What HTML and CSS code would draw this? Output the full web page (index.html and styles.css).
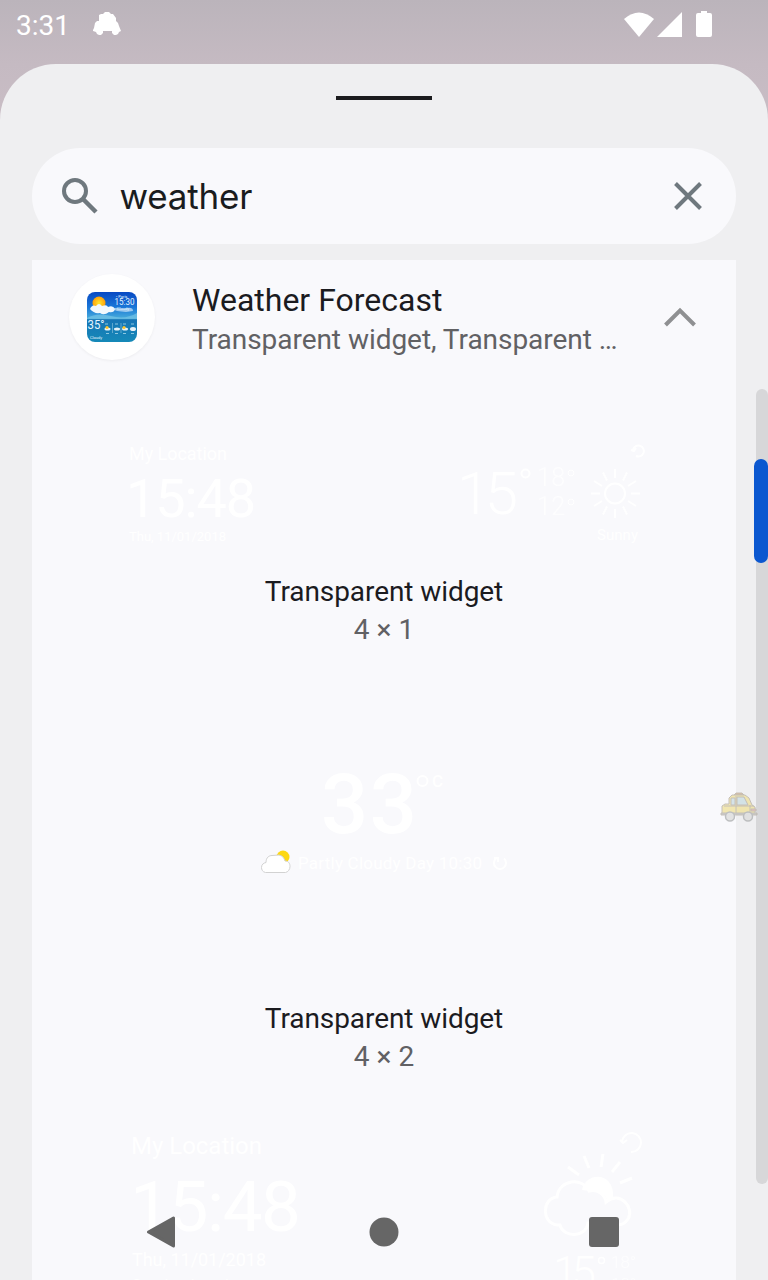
FILE: index.html
```html
<!DOCTYPE html>
<html lang="en">
<head>
<meta charset="utf-8">
<title>Widgets</title>
<link rel="stylesheet" href="styles.css">
</head>
<body>
<div class="screen">
  <header class="status">
    <span class="clock">3:31</span>
    <svg class="status-car" width="28" height="23" viewBox="0 0 28 23" fill="#fff"><path d="M6 9V3l2-1h2l2-2h4l2 2h2l3 4v3l2 2 1 3 2 5-2 1-1 2-2 1h-2l-2-2v-2H10v2l-2 2H6l-2-1-1-2-3-1V18l1-2 1-5 2-2z"/></svg>
    <svg class="status-icons" width="90" height="28" viewBox="0 0 90 28" fill="#fff"><path d="M0 8Q15-5 30 8L15 26Z"/><path d="M33 26L58 1V26Z"/><path d="M77 0h6v2h3q2 0 2 2v20q0 2-2 2H74q-2 0-2-2V4q0-2 2-2h3z"/></svg>
  </header>
  <main class="sheet">
    <div class="handle"></div>
    <div class="search">
      <svg width="36" height="36" viewBox="0 0 36 36" fill="none" stroke="#6f787e" stroke-width="4"><circle cx="13" cy="13" r="11"/><path d="M21.500 21.500L34 34" stroke-width="4.500"/></svg>
      <span class="query">weather</span>
      <svg width="28" height="28" viewBox="0 0 28 28" fill="none" stroke="#6f787e" stroke-width="4"><path d="M1.500 1.500L26.500 26.500M26.500 1.500L1.500 26.500"/></svg>
    </div>
    <section class="results">
      <div class="app">
        <div class="app-icon">
          <svg width="50" height="50" viewBox="0 0 50 50">
            <defs>
              <linearGradient id="sky" x1="0" y1="0" x2="0" y2="1"><stop offset="0" stop-color="#0849c3"/><stop offset=".3" stop-color="#1976d8"/><stop offset=".52" stop-color="#45a9da"/><stop offset=".56" stop-color="#1775b5"/><stop offset="1" stop-color="#1589b8"/></linearGradient>
              <radialGradient id="glow"><stop offset="0" stop-color="#ffe72f"/><stop offset="1" stop-color="#ff9f08"/></radialGradient>
              <filter id="soft"><feGaussianBlur stdDeviation=".7"/></filter>
              <clipPath id="tile"><rect width="50" height="50" rx="8"/></clipPath>
            </defs>
            <g clip-path="url(#tile)">
              <rect width="50" height="50" fill="url(#sky)"/>
              <g filter="url(#soft)">
                <path d="M0 26Q10 20 24 24T50 21V27H0Z" fill="#7bc7e8" opacity=".65"/>
                <circle cx="12" cy="11" r="6.500" fill="url(#glow)"/>
                <path d="M3 17q2-5 6-3 3-4 6 0 5-2 6 1 5-2 7 2-1 4-6 3-5 4-9 1-6 1-10-4z" fill="#f1f8fd"/>
                <path d="M25 17q5-2 7-1t8 0 6 3l-7 1-9-1z" fill="#dcecfb" opacity=".65"/>
              </g>
              <g fill="#e5f5ff" font-family="Roboto, sans-serif">
                <text x="27.500" y="13" font-size="9" textLength="20" lengthAdjust="spacingAndGlyphs">15:30</text>
                <text x="29" y="5.500" font-size="4">• Paris</text>
                <text x="30" y="18" font-size="4">Cloudy</text>
                <text x=".5" y="37" font-size="12" textLength="17" lengthAdjust="spacingAndGlyphs">35°</text>
                <text x="3" y="46.500" font-size="4">Cloudy</text>
              </g>
              <g fill="#e6f1f7"><ellipse cx="20.500" cy="37" rx="3" ry="1.500"/><ellipse cx="30" cy="37" rx="3" ry="1.500"/><ellipse cx="38" cy="37" rx="3" ry="1.500"/><ellipse cx="46" cy="37" rx="3" ry="2"/><path d="M18 32h3M28 32h3M36 32h3M44 32h3M19 41.500h3M28 41.500h3M36 41.500h3M44 41.500h3" stroke="#8bc7e0"/><path d="M25.500 31v10M34 31v10" stroke="#80bbd8" stroke-width=".7"/></g>
              <g fill="#ffc52c"><circle cx="20" cy="35.500" r="1.600"/><circle cx="37" cy="35.500" r="1.600"/></g>
            </g>
          </svg>
        </div>
        <div class="app-text">
          <div class="app-name">Weather Forecast</div>
          <div class="app-sub">Transparent widget, Transparent …</div>
        </div>
        <svg class="chevron" width="32" height="20" viewBox="0 0 32 20" fill="none" stroke="#8f9092" stroke-width="4"><path d="M1.500 18L16 3.500 30.500 18"/></svg>
      </div>

      <article class="widget">
        <svg class="preview" width="704" height="199" viewBox="32 374 704 199">
          <g fill="#fff">
            <text x="129" y="460" font-size="18" textLength="98">My Location</text>
            <text x="126" y="516.500" font-size="54" textLength="130">15:48</text>
            <text x="129" y="541" font-size="13" textLength="97">Thu, 11/01/2018</text>
            <text x="457" y="514" font-size="60" font-weight="300" textLength="61">15</text>
            <text x="537" y="486" font-size="25" font-weight="300" opacity=".75" textLength="28">18</text>
            <text x="537" y="515" font-size="25" font-weight="300" opacity=".75" textLength="28">12</text>
            <text x="597" y="540" font-size="15" textLength="41">Sunny</text>
          </g>
          <g fill="none" stroke="#fff" stroke-width="2">
            <circle cx="525.500" cy="473.500" r="4"/><circle cx="571" cy="473" r="3" stroke-width="1"/><circle cx="571" cy="502" r="3" stroke-width="1"/>
            <circle cx="615" cy="493.500" r="10"/>
            <path d="M615 469v9M615 509v9M591 493.500h9M631 493.500h9M603 472.500l4 8M623 506.500l4 8M603 514.500l4-8M623 480.500l4-8M594 481l8 5M628 501l8 5M594 506l8-5M628 486l8-5"/>
            <path d="M633 450a5.500 5.500 0 1 1 3 6M631 450l3 1 2-3"/>
          </g>
        </svg>
        <div class="name">Transparent widget</div>
        <div class="size">4 × 1</div>
      </article>

      <article class="widget">
        <svg class="preview" width="704" height="351" viewBox="32 649 704 351">
          <g fill="#fff">
            <text x="321" y="832.500" font-size="83" font-weight="500" textLength="96">33</text>
            <text x="432" y="787" font-size="17" font-weight="500">C</text>
            <text x="298" y="869" font-size="17" textLength="184">Partly Cloudy Day 10:30</text>
          </g>
          <circle cx="422.500" cy="781" r="5" fill="none" stroke="#fff" stroke-width="2"/>
          <path d="M496 858.500a6 6 0 1 0 8 0M494 858h4v4" fill="none" stroke="#fff" stroke-width="2"/>
          <circle cx="283" cy="857" r="6.500" fill="#fdd814"/>
          <path d="M265.500 872.500c-3-.5-4-3-4-5 0-3 2-4.500 4.500-5 0-5 3-7 6-7l7-.5c4 1 5 3 6 6 4 0 5 3 5 5.500 0 3-2 5.500-4.500 6z" fill="#fff" stroke="#d2d2d2" stroke-width="1"/>
        </svg>
        <div class="name">Transparent widget</div>
        <div class="size">4 × 2</div>
      </article>

      <article class="widget">
        <svg class="preview" width="704" height="204" viewBox="32 1076 704 204">
          <g fill="#fff">
            <text x="131" y="1154" font-size="24" textLength="131">My Location</text>
            <text x="130" y="1231" font-size="71" textLength="171">15:48</text>
            <text x="132" y="1266" font-size="18" textLength="134">Thu, 11/01/2018</text>
            <text x="132" y="1291" font-size="16">Sunday, Lunch</text>
            <text x="553" y="1288" font-size="44" font-weight="300" textLength="43">15</text>
            <text x="611" y="1268" font-size="17" font-weight="300" opacity=".75">18°</text>
            <text x="611" y="1290" font-size="17" font-weight="300" opacity=".75">12°</text>
          </g>
          <g fill="none" stroke="#fff" stroke-width="3">
            <path d="M568 1167l11 8M584 1156l5 12M603 1154l-2 13M620 1162l-8 10M632 1178l-12 5"/>
            <path d="M622 1142a9.500 9.500 0 1 1 9 10M620 1140l3 3 4-3" stroke-width="2"/>
            <path d="M557 1225c-16-2-15-27 0-28 2-18 26-20 32-6 9-2 16 4 17 11 14-12 29 6 22 17-4 6-10 7-16 5l-24-1c-2 15-25 15-28 2z"/>
            <circle cx="601.500" cy="1260.500" r="3" stroke-width="1.500"/>
          </g>
          <path d="M582 1190c4-19 33-18 31 7l-6 5c-2-9-8-13-17-11z" fill="#fff"/>
        </svg>
      </article>
    </section>
  </main>

  <div class="track"><div class="thumb"></div></div>
  <svg class="taxi" width="38" height="30" viewBox="0 0 38 30" stroke="#bcb6ad" stroke-width="1">
    <path d="M14 3l2-2h6l2 2z" fill="#d8b58e"/>
    <path d="M9 12V6l3-3h13l4 3 3 7 3 2v7H2v-8l3-2z" fill="#f0e3a4"/>
    <path d="M11 6h4v7h-4zM17 5h7l4 8H17z" fill="#cfe0e5"/>
    <path d="M4 14h30M16 4v18M30 13v9" fill="none"/>
    <path d="M1 21h36v2H1z" fill="#c4c4c4"/>
    <path d="M31 17h5v2h-5z" fill="#e8b4b3"/>
    <g fill="#dedede" stroke="#b4b6b7" stroke-width="1.500"><circle cx="10" cy="24.500" r="4.500"/><circle cx="28" cy="24.500" r="4.500"/></g>
  </svg>
  <nav class="nav">
    <svg width="32" height="32" viewBox="0 0 32 32"><path d="M1.500 16L26.500 2V30Z" fill="#666" stroke="#666" stroke-width="3" stroke-linejoin="round"/></svg>
    <svg width="30" height="30"><circle cx="15" cy="15" r="14.500" fill="#666"/></svg>
    <svg width="30" height="30"><rect width="30" height="30" rx="3" fill="#666"/></svg>
  </nav>
</div>
</body>
</html>
```
FILE: styles.css
```css
* { box-sizing: border-box; }
body { margin: 0; font-family: Roboto, "Noto Sans", sans-serif; }
svg { display: block; flex: none; }
.screen {
  position: relative;
  display: flex;
  flex-direction: column;
  width: 768px;
  height: 1280px;
  overflow: hidden;
  background: linear-gradient(#bbb4bb 0, #c5bac2 64px, #c9bdc5 120px);
}
.status {
  flex: none;
  display: flex;
  align-items: flex-start;
  height: 64px;
  padding: 11px 54px 0 16px;
  color: #fff;
}
.clock { width: 77px; font-size: 28px; line-height: 30px; }
.status-car { margin-top: 1px; }
.status-icons { margin-left: auto; }
.sheet {
  flex: 1;
  min-height: 0;
  display: flex;
  flex-direction: column;
  padding: 32px 32px 0;
  border-radius: 56px 56px 0 0;
  background: #efeff1;
}
.handle { flex: none; align-self: center; width: 96px; height: 4px; background: #1b1b1e; }
.search {
  flex: none;
  display: flex;
  align-items: center;
  height: 96px;
  margin: 48px 0 16px;
  padding: 0 34px 0 30px;
  border-radius: 48px;
  background: #f9f9fc;
}
.query {
  flex: 1;
  padding-left: 21.5px;
  color: #1a1c1e;
  font: 400 35px/48px Inter, sans-serif;
  letter-spacing: -0.2px;
}
.results { flex: 1; min-height: 0; overflow: hidden; background: #f9f9fc; }
.app { display: flex; align-items: center; height: 114px; padding: 0 40px 0 37px; }
.app-icon {
  display: grid;
  place-items: center;
  width: 86px;
  height: 86px;
  border-radius: 50%;
  background: #fff;
  box-shadow: 0 1px 3px #0000000d;
}
.app-text { flex: 1; padding: 5px 0 0 37px; }
.app-name { font-size: 32px; line-height: 40px; color: #1b1b1f; white-space: nowrap; }
.app-sub { font-size: 28px; line-height: 40px; letter-spacing: -0.04px; color: #616164; white-space: nowrap; }
.widget { display: flex; flex-direction: column; align-items: center; }
.preview { font-family: Roboto, sans-serif; }
.name { font-size: 28px; line-height: 38px; letter-spacing: -0.08px; color: #1b1b1f; }
.size { font-size: 28px; line-height: 38px; color: #616164; }
.track { position: absolute; right: 0; top: 389px; width: 12px; height: 795px; border-radius: 6px; background: #d7d7d9; }
.thumb { position: absolute; top: 70px; right: 0; width: 14px; height: 104px; border-radius: 7px; background: #0b57d0; }
.taxi { position: absolute; left: 720px; top: 792px; opacity: .85; }
.nav {
  position: absolute;
  left: 147px;
  top: 1216px;
  width: 472px;
  display: flex;
  align-items: center;
  justify-content: space-between;
}
```
